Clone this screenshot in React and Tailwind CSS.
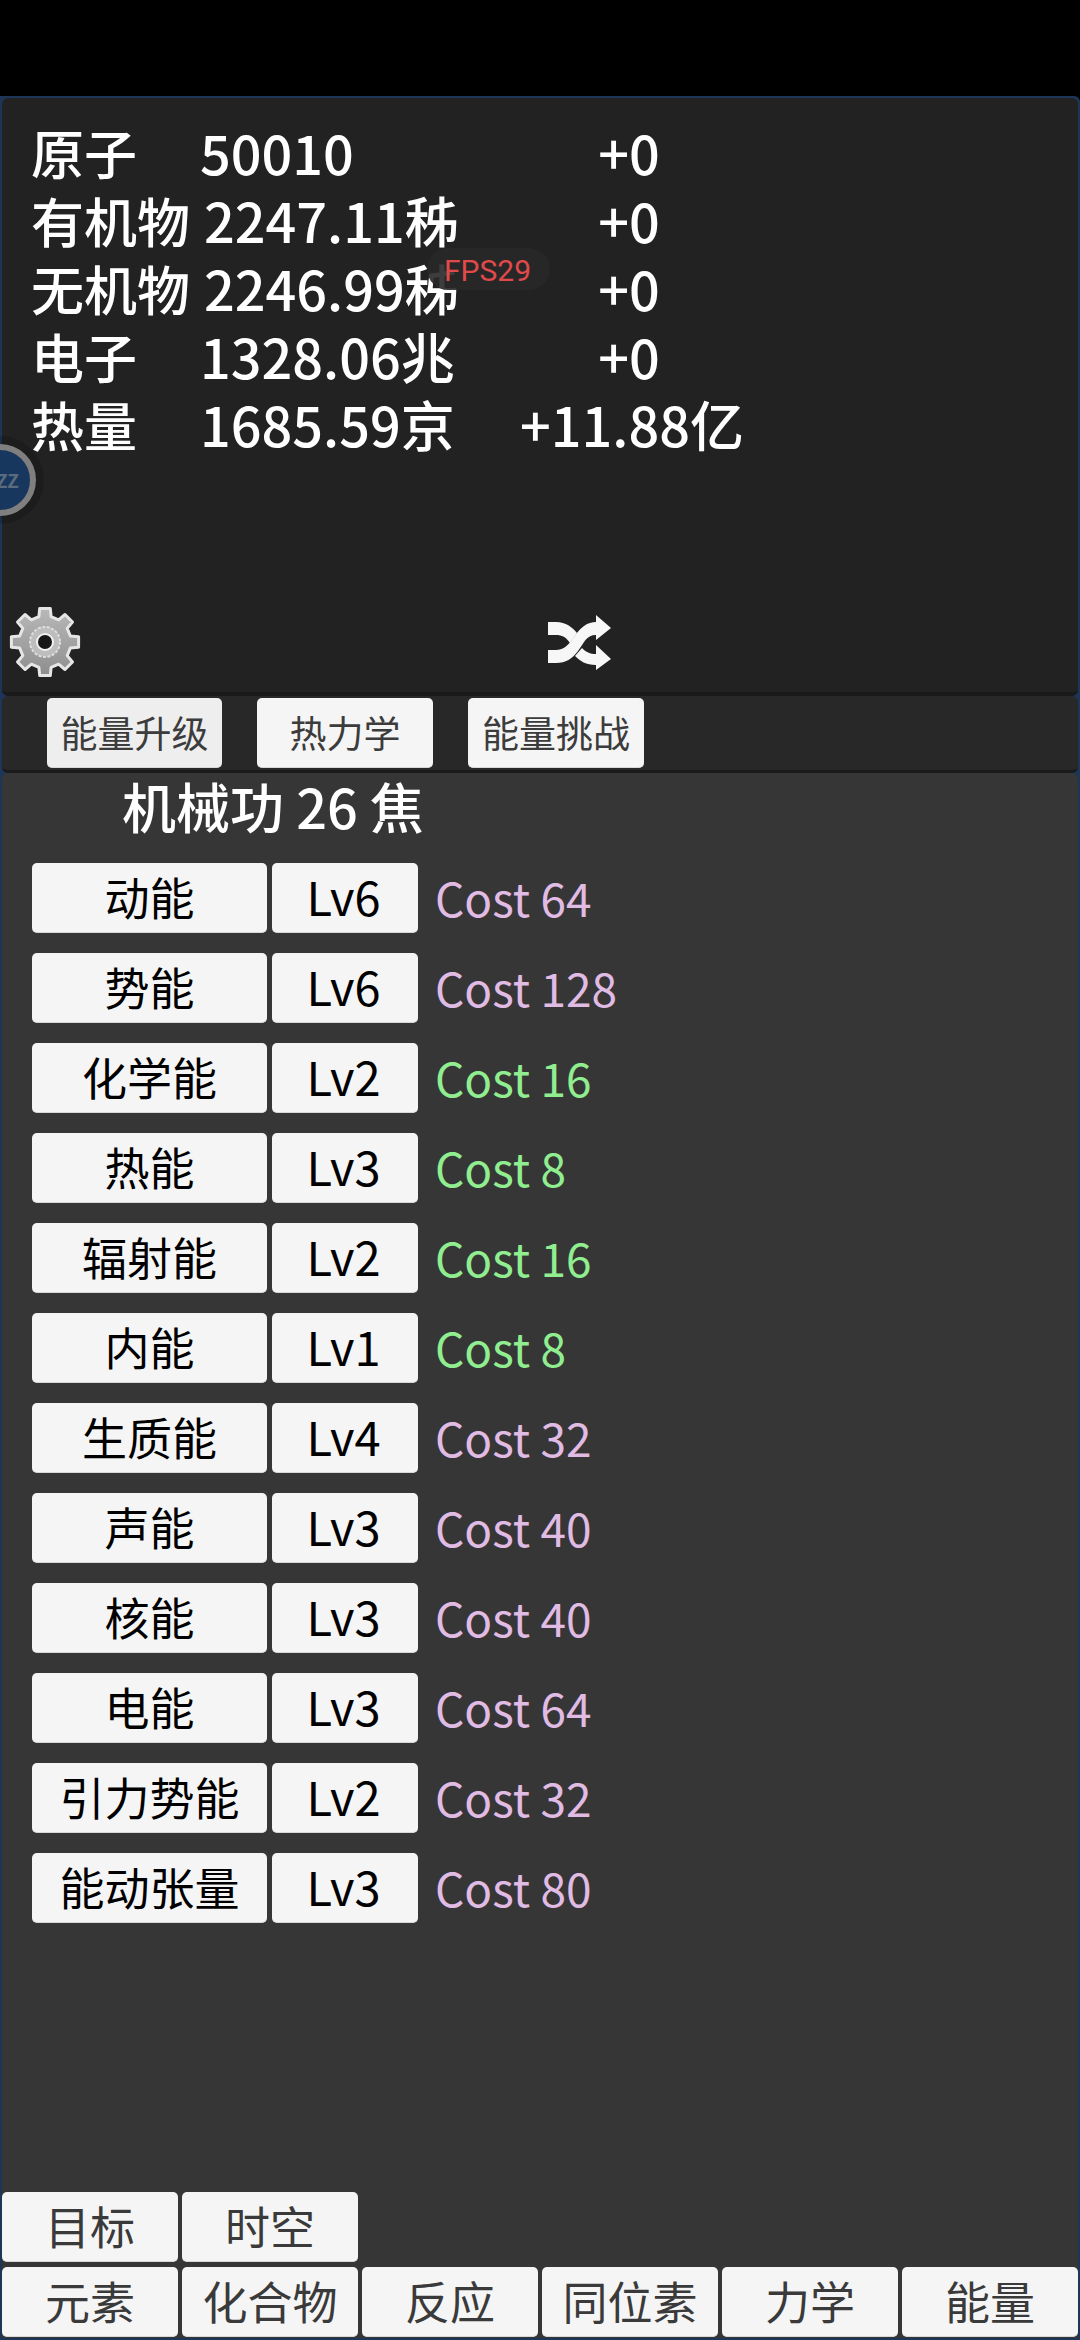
const font = { fontFamily: '"Noto Sans CJK SC", "Noto Sans", sans-serif' };

const stats = [
  ["原子", "50010", "+0", "pl-0"],
  ["有机物", "2247.11秭", "+0", "pl-[4px]"],
  ["无机物", "2246.99秭", "+0", "pl-[4px]"],
  ["电子", "1328.06兆", "+0", "pl-0"],
  ["热量", "1685.59京", "+11.88亿", "pl-0"],
];

const rows = [
  ["动能", "Lv6", "Cost 64", false],
  ["势能", "Lv6", "Cost 128", false],
  ["化学能", "Lv2", "Cost 16", true],
  ["热能", "Lv3", "Cost 8", true],
  ["辐射能", "Lv2", "Cost 16", true],
  ["内能", "Lv1", "Cost 8", true],
  ["生质能", "Lv4", "Cost 32", false],
  ["声能", "Lv3", "Cost 40", false],
  ["核能", "Lv3", "Cost 40", false],
  ["电能", "Lv3", "Cost 64", false],
  ["引力势能", "Lv2", "Cost 32", false],
  ["能动张量", "Lv3", "Cost 80", false],
];

function gearPath(cx, cy, rOut, rIn, n) {
  const pts = [];
  const step = (Math.PI * 2) / n;
  for (let i = 0; i < n; i++) {
    const a = -Math.PI / 2 + i * step;
    const p = (r, d) => [cx + r * Math.cos(a + d), cy + r * Math.sin(a + d)];
    pts.push(p(rIn, -step * 0.3), p(rOut, -step * 0.2), p(rOut, step * 0.2), p(rIn, step * 0.3));
  }
  return "M" + pts.map((q) => q[0].toFixed(1) + " " + q[1].toFixed(1)).join("L") + "Z";
}

function Gear() {
  const d = gearPath(37, 37, 34, 26, 8);
  return (
    <svg width="74" height="74" viewBox="0 0 74 74">
      <defs>
        <linearGradient id="gearFill" x1="0" y1="0" x2="0" y2="1">
          <stop offset="0" stopColor="#b8b8b8" />
          <stop offset="1" stopColor="#8e8e8e" />
        </linearGradient>
      </defs>
      <path d={d} fill="url(#gearFill)" stroke="#e6e6e6" strokeWidth="3" strokeLinejoin="round" />
      <circle cx="37" cy="37" r="15" fill="#bdbdbd" stroke="#dedede" strokeWidth="2" strokeDasharray="3 1.5" />
      <circle cx="37" cy="37" r="8" fill="#161616" stroke="#f0f0f0" strokeWidth="2" />
    </svg>
  );
}

function Shuffle() {
  return (
    <svg width="63" height="55" viewBox="0 0 63 55" fill="#f7f7f7">
      <path d="M0 7 H8 C18 7 24 12 29 18 L22 28 C18 22 14 20 8 20 H0 Z" />
      <path d="M0 35 H8 C22 35 24 20 36 11 C40 8 44 7 48 7 V0 L63 13 L48 25 V20 C38 20 36 28 30 36 C24 44 18 48 8 48 H0 Z" />
      <path d="M34 33 C38 37 42 39 48 39 V30 L63 44 L48 55 V50 C38 50 32 46 27 41 Z" />
    </svg>
  );
}

function Btn({ className = "", children }) {
  return (
    <div className={`flex h-[70px] shrink-0 items-center justify-center rounded-[5px] border-b border-[#d8d8d8] ${className}`}>
      {children}
    </div>
  );
}

export default function App() {
  return (
    <div className="flex h-[2340px] w-[1080px] flex-col overflow-hidden bg-black" style={font}>
      <div className="h-[96px] shrink-0 bg-black" />
      <div className="relative flex min-h-0 flex-1 flex-col rounded-tr-[6px] bg-[#1d3557] px-[2px] pb-[2px] pt-[2px]">
        <div className="flex h-[598px] shrink-0 flex-col rounded-[6px] border-b-[4px] border-[#1a1a1a] bg-[#222222] pl-[29px]">
          <div className="mt-[20px] grid grid-cols-[169px_320px_218px] font-medium leading-[68px] text-white">
            {stats.map(([a, b, c, pad]) => (
              <div key={a} className="contents">
                <div className="whitespace-nowrap text-[53px]">{a}</div>
                <div className={`whitespace-nowrap text-[54px] ${pad}`}>{b}</div>
                <div className="whitespace-nowrap text-center text-[54px]">{c}</div>
              </div>
            ))}
          </div>
          <div className="mt-auto mb-[13px] -ml-[23px] flex items-center">
            <Gear />
            <div className="ml-[466px]">
              <Shuffle />
            </div>
          </div>
        </div>
        <div className="flex h-[77px] shrink-0 items-start gap-[35px] rounded-[6px] border-b-[3px] border-[#1a1a1a] bg-[#282828] pl-[45px] pt-[2px] text-[37px] text-[#3c3c3c]">
          <Btn className="w-[175px] bg-[#eeeeee]">能量升级</Btn>
          <Btn className="w-[176px] bg-[#f5f5f5]">热力学</Btn>
          <Btn className="w-[176px] bg-[#f5f5f5]">能量挑战</Btn>
        </div>
        <div className="flex min-h-0 flex-1 flex-col rounded-t-[6px] bg-[#363636]">
          <div className="pl-[120px] text-[54px] font-medium leading-[66px] text-white">机械功 26 焦</div>
          <div className="mt-[24px] flex flex-col gap-[20px] pl-[30px]">
            {rows.map(([a, b, c, ok]) => (
              <div key={a} className="flex h-[70px] items-center">
                <Btn className="w-[235px] bg-[#f5f5f5] pb-[1px] text-[45px] leading-[60px] text-black">{a}</Btn>
                <Btn className="ml-[5px] w-[146px] bg-[#f5f5f5] pb-[3px] pr-[3px] text-[47px] leading-[60px] text-black">{b}</Btn>
                <div className={`ml-[17px] pb-[3px] text-[46px] leading-[60px] ${ok ? "text-[#90ee90]" : "text-[#e0bbe4]"}`}>{c}</div>
              </div>
            ))}
          </div>
          <div className="mt-auto mb-[1px] flex flex-col gap-[5px] text-[45px] text-[#3a3a3a]">
            <div className="flex gap-[4px]">
              <Btn className="w-[176px] bg-[#f5f5f5] pb-[2px]">目标</Btn>
              <Btn className="w-[176px] bg-[#f5f5f5] pb-[2px]">时空</Btn>
            </div>
            <div className="flex gap-[4px]">
              {["元素", "化合物", "反应", "同位素", "力学", "能量"].map((t) => (
                <Btn key={t} className="w-[176px] bg-[#f5f5f5] pb-[2px]">{t}</Btn>
              ))}
            </div>
          </div>
        </div>
        <div className="absolute left-[427px] top-[152px] flex h-[42px] w-[123px] items-center rounded-full bg-[#282828]/90 pl-[17px] pt-[2px] text-[30px] text-[#e04a4a]" style={{ fontFamily: 'Roboto, sans-serif' }}>
          FPS29
        </div>
        <div className="absolute -left-[36px] top-[348px] flex h-[72px] w-[72px] items-center justify-end rounded-full border-[6px] border-[#7f7f7f] bg-[#17375e] pr-[11px] text-[19px] font-bold text-[#5b6b7e] shadow-[0_0_0_8px_rgba(0,0,0,0.15)]">
          ZZ
        </div>
      </div>
    </div>
  );
}
